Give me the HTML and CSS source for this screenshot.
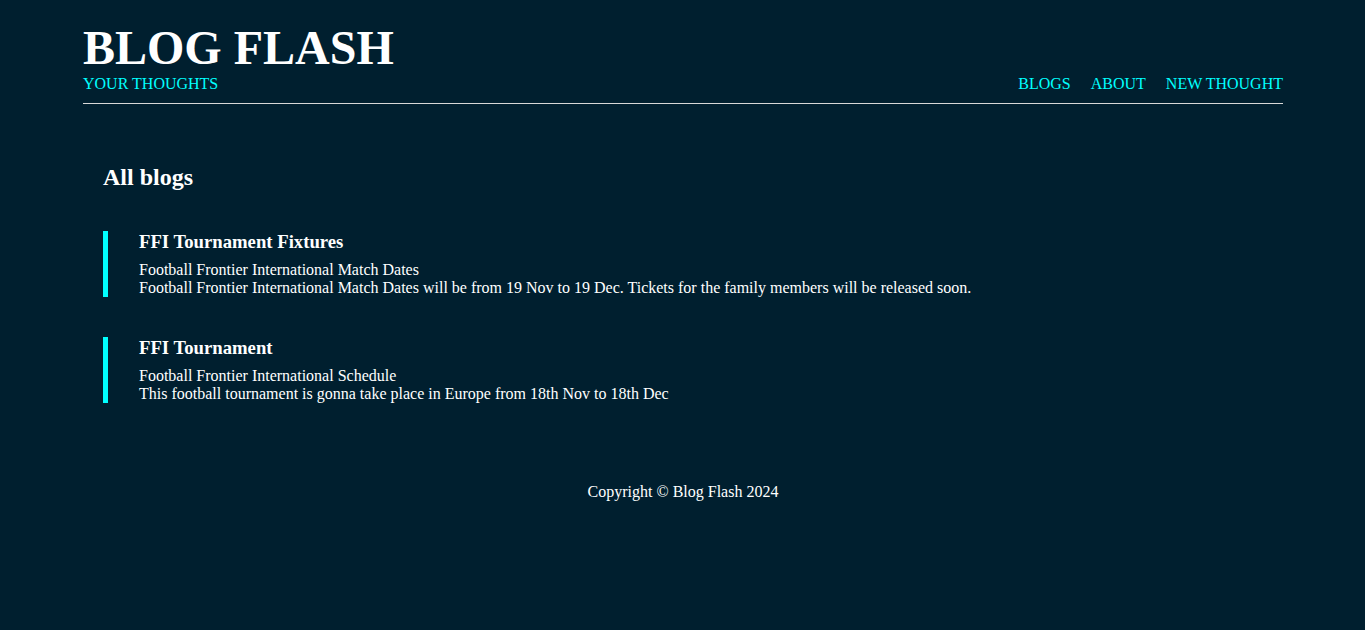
FILE: index.html
```html
<!DOCTYPE html>
<html lang="en">
<head>
<meta charset="utf-8">
<title>Blog Flash</title>
<link rel="stylesheet" href="styles.css">
</head>
<body>
<div class="page">
  <header class="site-header">
    <h1 class="brand">BLOG FLASH</h1>
    <div class="header-row">
      <span class="tagline">YOUR THOUGHTS</span>
      <nav class="nav">
        <a href="#">BLOGS</a>
        <a href="#">ABOUT</a>
        <a href="#">NEW THOUGHT</a>
      </nav>
    </div>
  </header>
  <main class="content">
    <h2 class="section-title">All blogs</h2>
    <div class="blog-list">
      <article class="blog">
        <h3 class="blog-title">FFI Tournament Fixtures</h3>
        <p class="blog-text">Football Frontier International Match Dates<br>Football Frontier International Match Dates will be from 19 Nov to 19 Dec. Tickets for the family members will be released soon.</p>
      </article>
      <article class="blog">
        <h3 class="blog-title">FFI Tournament</h3>
        <p class="blog-text">Football Frontier International Schedule<br>This football tournament is gonna take place in Europe from 18th Nov to 18th Dec</p>
      </article>
    </div>
  </main>
  <footer class="site-footer">Copyright © Blog Flash 2024</footer>
</div>
</body>
</html>
```
FILE: styles.css
```css
html, body {
  margin: 0;
  padding: 0;
  background: #001f2f;
}
body {
  font-family: "Liberation Serif", "Times New Roman", serif;
  font-size: 16px;
  color: #ffffff;
  min-height: 630px;
}
.page {
  width: 1200px;
  margin: 0 auto;
  padding: 20px 0 0 1px;
}
.site-header {
  border-bottom: 1px solid #d8d8d8;
  padding-bottom: 10px;
}
.brand {
  margin: 0;
  font-size: 48px;
  line-height: 55px;
  font-weight: bold;
  color: #ffffff;
}
.header-row {
  display: flex;
  justify-content: space-between;
  align-items: flex-end;
}
.tagline {
  color: #00ffff;
}
.nav {
  display: flex;
  gap: 20px;
}
.nav a {
  color: #00ffff;
  text-decoration: none;
}
.content {
  padding: 59px 20px 0;
}
.section-title {
  margin: 0;
  font-size: 24px;
  line-height: 28px;
  font-weight: bold;
}
.blog-list {
  display: flex;
  flex-direction: column;
  gap: 40px;
  margin-top: 40px;
}
.blog {
  border-left: 5px solid #00ffff;
  padding-left: 31px;
}
.blog-title {
  margin: 0;
  font-size: 18.72px;
  line-height: 22px;
  font-weight: bold;
}
.blog-text {
  margin: 8px 0 0;
  line-height: 18px;
}
.site-footer {
  text-align: center;
  margin-top: 80px;
  line-height: 18px;
}
```
